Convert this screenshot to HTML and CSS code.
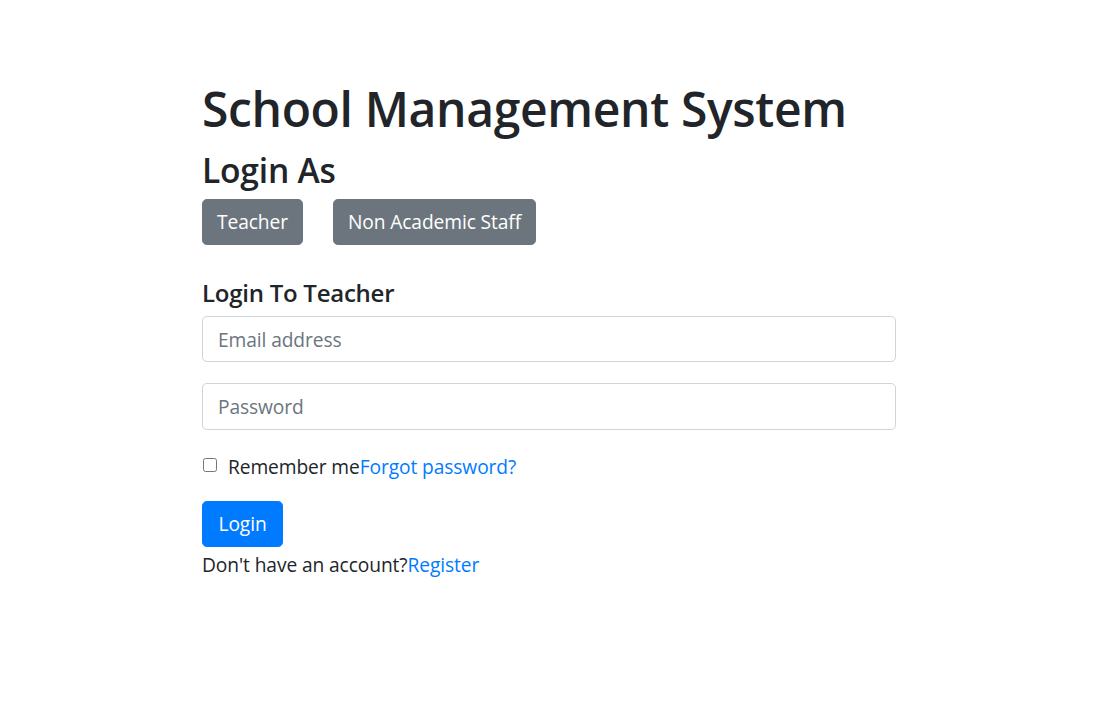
FILE: index.html
```html
<!DOCTYPE html>
<html lang="en">
<head>
<meta charset="utf-8">
<title>School Management System</title>
<link rel="stylesheet" href="styles.css">
</head>
<body>
<main class="page">
  <h1 class="title">School Management System</h1>
  <h2 class="subtitle">Login As</h2>
  <div class="role-row">
    <button class="btn btn-secondary" type="button">Teacher</button>
    <button class="btn btn-secondary" type="button">Non Academic Staff</button>
  </div>
  <form class="login-form">
    <h5 class="form-title">Login To Teacher</h5>
    <input class="field" type="email" placeholder="Email address">
    <input class="field" type="password" placeholder="Password">
    <div class="check-row">
      <input class="check" type="checkbox" id="remember">
      <label for="remember" class="check-label">Remember me</label><a href="#" class="link">Forgot password?</a>
    </div>
    <button class="btn btn-primary" type="submit">Login</button>
    <p class="register">Don't have an account?<a href="#" class="link">Register</a></p>
  </form>
</main>
</body>
</html>
```

FILE: styles.css
```css
* { box-sizing: border-box; }
html, body { margin: 0; padding: 0; background: #fff; }
body {
  font-family: "Open Sans", "Noto Sans", sans-serif;
  font-size: 19.2px;
  line-height: 1.5;
  letter-spacing: -0.1px;
  color: #212529;
}
.page {
  width: 694px;
  margin-left: 202px;
  padding-top: 79.6px;
}
.title {
  font-size: 48px;
  line-height: 1.2;
  font-weight: 600;
  letter-spacing: -0.35px;
  margin: 0 0 12.6px;
}
.subtitle {
  font-size: 33.6px;
  line-height: 1.2;
  font-weight: 600;
  letter-spacing: -0.2px;
  margin: 0 0 8.9px;
}
.role-row {
  display: flex;
  gap: 30px;
}
.btn {
  display: inline-block;
  font-family: inherit;
  font-size: 19.2px;
  line-height: 1.5;
  letter-spacing: -0.1px;
  padding: 7.6px 14px;
  border: 1px solid transparent;
  border-radius: 4.8px;
  color: #fff;
  cursor: pointer;
}
.btn-secondary { background: #6c757d; border-color: #6c757d; }
.btn-primary { background: #007bff; border-color: #007bff; padding: 7.6px 15.5px; }
.login-form {
  display: flex;
  flex-direction: column;
  align-items: flex-start;
  margin-top: 34.3px;
}
.form-title {
  font-size: 24px;
  line-height: 1.2;
  font-weight: 600;
  letter-spacing: -0.25px;
  margin: 0 0 7.9px;
}
.field {
  width: 100%;
  height: 46.4px;
  padding: 7px 15px;
  font-family: inherit;
  font-size: 19.2px;
  letter-spacing: -0.1px;
  color: #495057;
  border: 1px solid #ced4da;
  border-radius: 4.8px;
  margin: 0 0 21px;
  background: #fff;
}
.field::placeholder { color: #6c757d; opacity: 1; }
.check-row {
  display: flex;
  align-items: flex-start;
  margin: 2.6px 0 19px;
}
.check {
  width: 14px;
  height: 14px;
  margin: 5px 11px 0 1px;
}
.check-label { color: #212529; }
.link { color: #007bff; text-decoration: none; }
.register { margin: 4px 0 0; }
```
